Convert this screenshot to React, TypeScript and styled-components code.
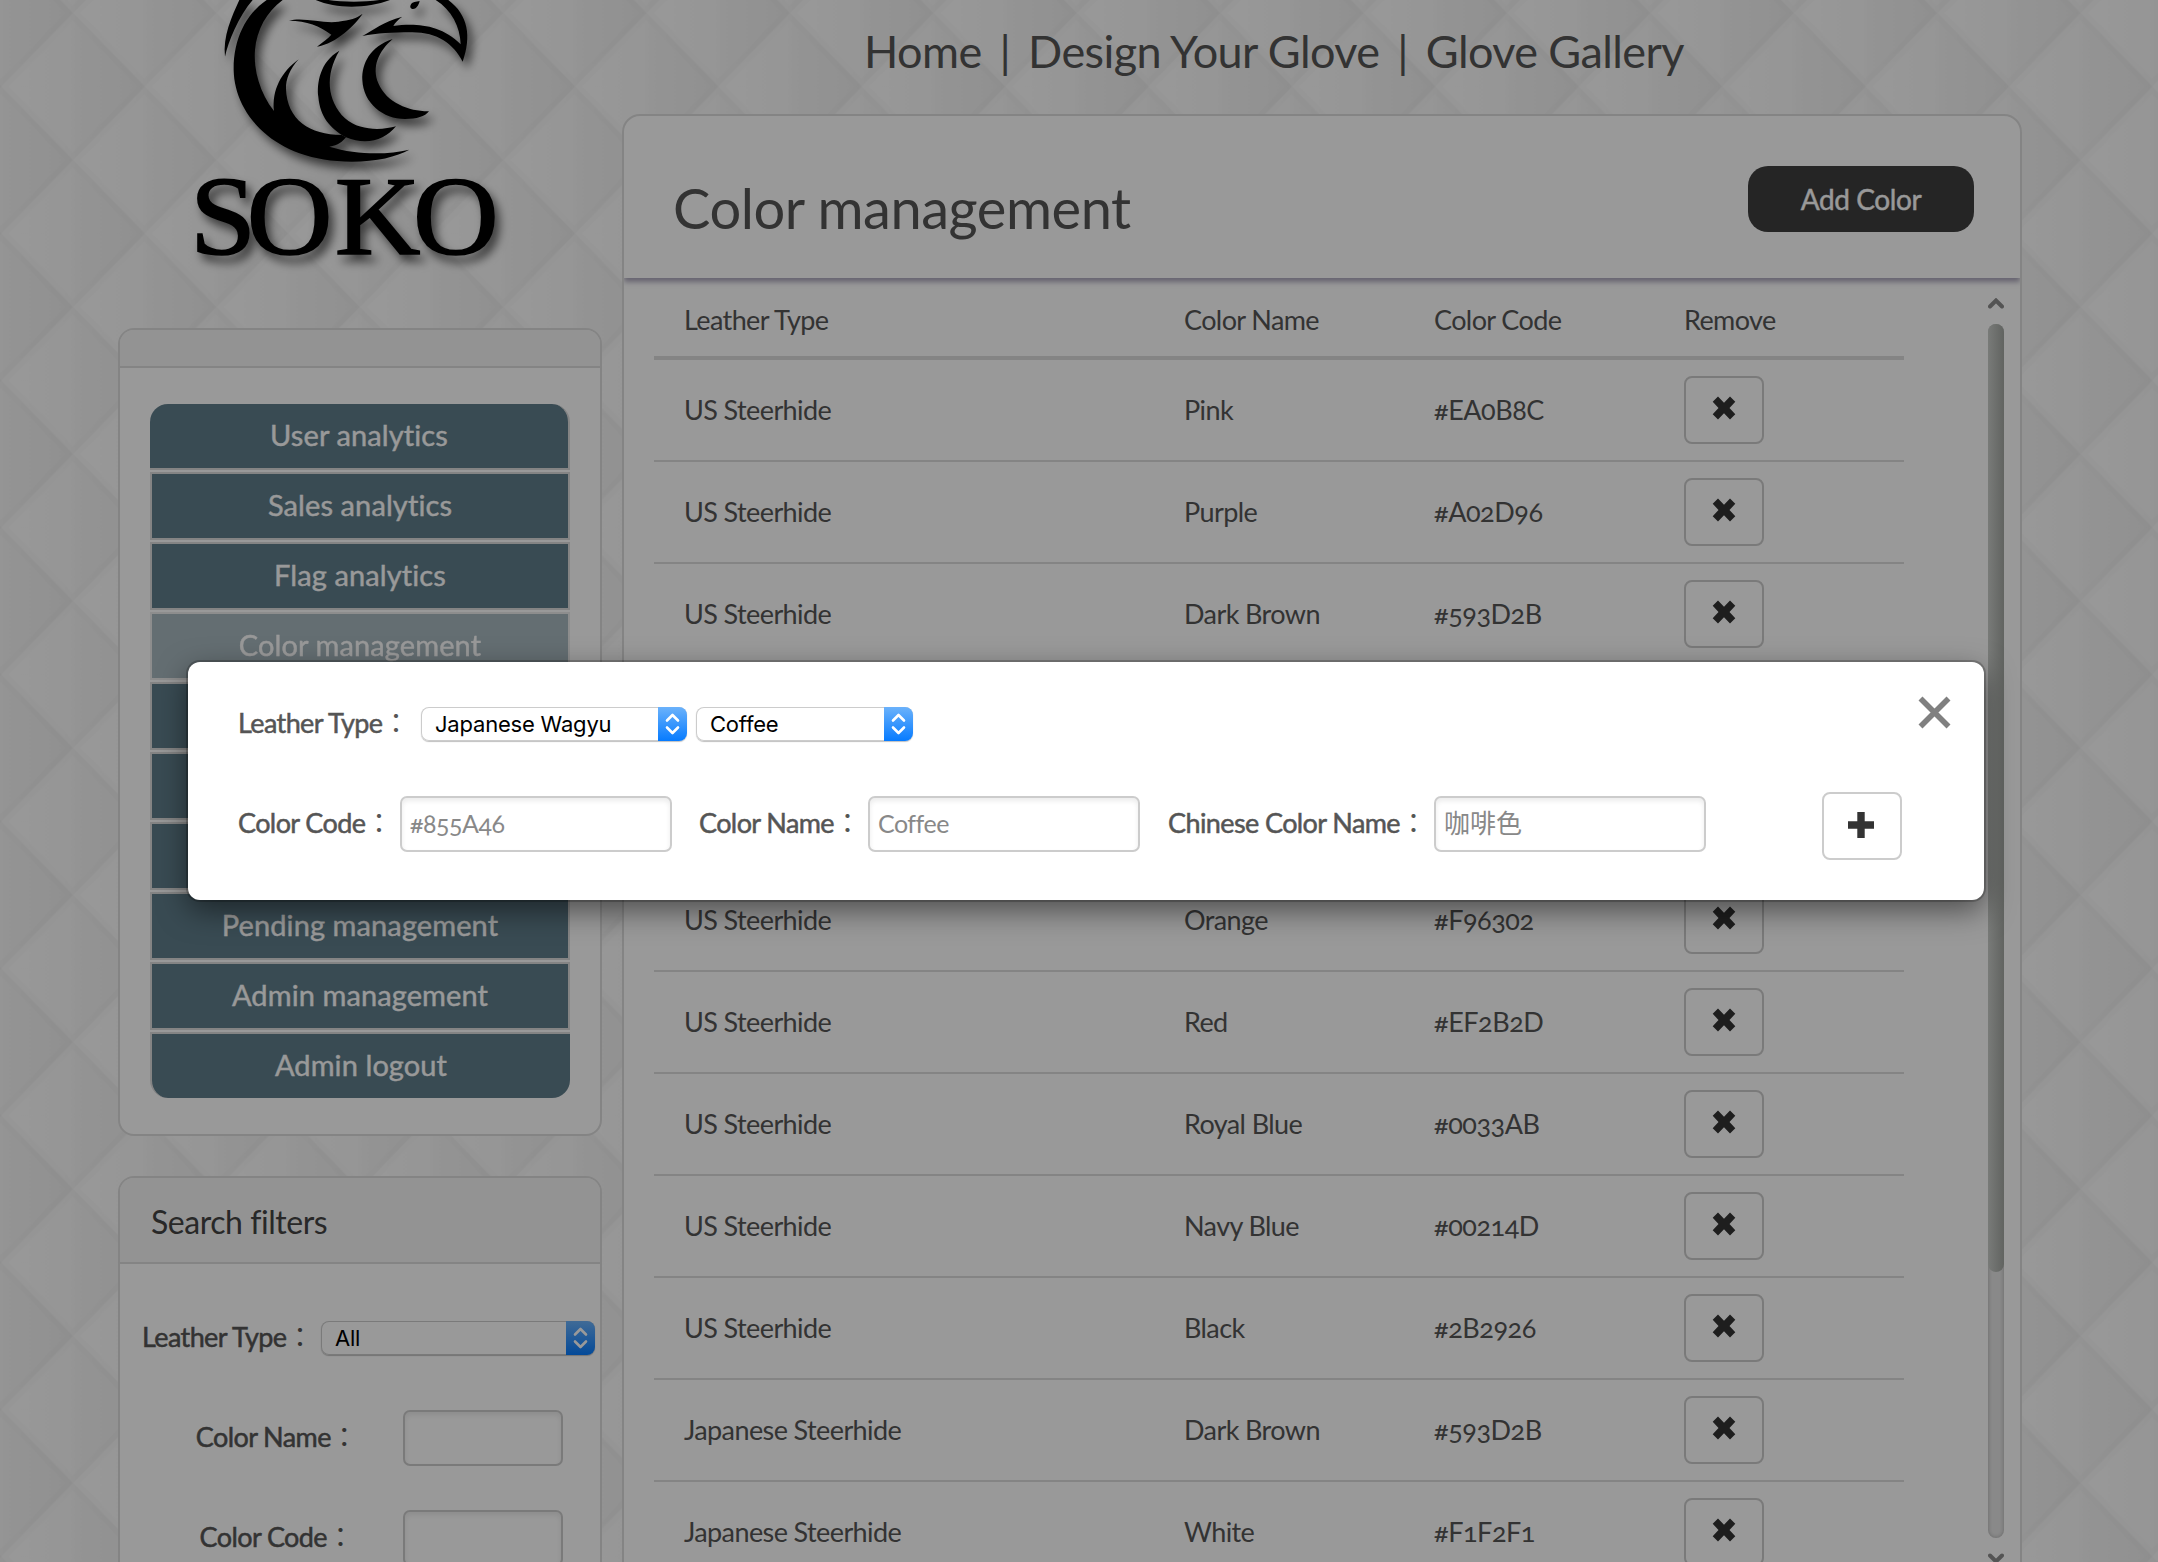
import React from "react";
import styled, { createGlobalStyle, css } from "styled-components";

const GlobalStyle = createGlobalStyle`
  * { box-sizing: border-box; }
  html, body { margin: 0; padding: 0; }
  body {
    width: 2158px;
    height: 1562px;
    overflow: hidden;
    background: #f9f9f9;
    color: #555;
    font-family: Lato, "Noto Sans CJK TC", sans-serif;
    font-size: 27px;
    font-variant-numeric: oldstyle-nums;
    font-variant-ligatures: none;
  }
`;

const Viewport = styled.div`
  position: relative;
  width: 2158px;
  height: 1562px;
  overflow: hidden;
`;

const Backdrop = styled.svg`
  position: absolute;
  inset: 0;
`;

const Page = styled.div`
  position: relative;
  display: flex;
  gap: 20px;
  height: 100%;
  padding: 0 136px 0 118px;
`;

const Sidebar = styled.aside`
  width: 484px;
  flex: none;
`;

const LogoBox = styled.div`
  height: 328px;
  padding-left: 52px;
  svg {
    display: block;
    overflow: visible;
    filter: drop-shadow(5px 7px 5px rgba(0, 0, 0, 0.6));
  }
`;

const Panel = styled.section`
  background: #fff;
  border: 2px solid #ddd;
  border-radius: 16px;
  overflow: hidden;
`;

const SidePanel = styled(Panel)<{ $height: number }>`
  height: ${(p) => p.$height}px;
  margin-bottom: 40px;
`;

const SideHeading = styled.div<{ $height: number }>`
  height: ${(p) => p.$height}px;
  padding-left: 31px;
  background: #f5f5f5;
  border-bottom: 2px solid #ddd;
  color: #444;
  font-size: 32px;
  line-height: 88px;
  letter-spacing: -0.45px;
`;

const Menu = styled.nav`
  display: flex;
  flex-direction: column;
  gap: 2px;
  width: 420px;
  margin: 36px 0 0 30px;
`;

const MenuItem = styled.a<{ $active?: boolean }>`
  height: 68px;
  border: 2px solid #ddd;
  background: #607d8b;
  color: #fff;
  font-size: 29px;
  line-height: 61px;
  letter-spacing: 0.1px;
  text-align: center;
  -webkit-text-stroke: 0.4px currentColor;
  ${(p) => p.$active && css`opacity: 0.55;`}
  &:first-child {
    height: 66px;
    border-top: 0;
    border-left: 0;
    border-radius: 18px 18px 0 0;
  }
  &:last-child {
    height: 66px;
    border-right: 0;
    border-bottom: 0;
    border-radius: 0 0 18px 18px;
  }
`;

const Filters = styled.div`
  display: flex;
  flex-direction: column;
  padding-top: 57px;
`;

const FilterSelectRow = styled.div`
  display: flex;
  align-items: center;
  height: 34px;
  margin-bottom: 55px;
  padding-left: 22px;
`;

const FilterRow = styled.div`
  display: flex;
  align-items: center;
  height: 56px;
  margin-bottom: 44px;
  padding-left: 30px;
`;

const Label = styled.label<{ $width: number; $center?: boolean }>`
  flex: none;
  width: ${(p) => p.$width}px;
  padding-bottom: 2px;
  line-height: 34px;
  letter-spacing: -0.6px;
  white-space: nowrap;
  text-align: ${(p) => (p.$center ? "center" : "left")};
  -webkit-text-stroke: 0.5px currentColor;
`;

const Colon = styled.span`
  -webkit-text-stroke: 0;
`;

const Field = styled.input<{ $width: number; $chinese?: boolean }>`
  flex: none;
  width: ${(p) => p.$width}px;
  height: 56px;
  padding: 0 8px 3px;
  border: 2px solid #ccc;
  border-radius: 7px;
  background: #fff;
  box-shadow: inset 0 3px 5px rgba(0, 0, 0, 0.08);
  font: inherit;
  font-size: ${(p) => (p.$chinese ? 26 : 25)}px;
  font-variant-numeric: oldstyle-nums;
  font-variant-ligatures: none;
  letter-spacing: ${(p) => (p.$chinese ? 0 : -0.5)}px;
  &::placeholder { color: #888; opacity: 1; }
`;

const SelectBox = styled.div<{ $width: number; $stepper: number; $inset: number }>`
  display: flex;
  flex: none;
  align-items: stretch;
  width: ${(p) => p.$width}px;
  height: 34px;
  border-radius: 8px;
  background: #fff;
  box-shadow: inset 0 0 0 1px #ccc, 0 1px 1px rgba(0, 0, 0, 0.25);
  color: #000;
  font: 22px/35px Inter, sans-serif;
  letter-spacing: -0.2px;
  overflow: hidden;
  > span { flex: 1; padding-left: ${(p) => p.$inset}px; }
  > svg {
    width: ${(p) => p.$stepper}px;
    height: 34px;
    background: linear-gradient(#6bb2fb, #067bff);
  }
`;

const Main = styled.main`
  width: 1400px;
  flex: none;
`;

const TopNav = styled.nav`
  display: flex;
  align-items: flex-start;
  height: 114px;
  padding-left: 242px;
  color: #555;
  font-size: 45px;
  line-height: 103px;
  letter-spacing: -0.6px;
  white-space: pre;
`;

const Divider = styled.span`
  margin: 0 7px;
`;

const MainPanel = styled(Panel)`
  height: 1500px;
  border-radius: 18px;
`;

const MainHeader = styled.header`
  position: relative;
  display: flex;
  justify-content: space-between;
  align-items: flex-start;
  height: 162px;
  padding: 50px 46px 0 49px;
  box-shadow: 0 4px 5px rgba(90, 80, 120, 0.5);
`;

const Title = styled.h1`
  margin: 0;
  font-size: 56px;
  font-weight: 400;
  line-height: 84px;
  letter-spacing: -0.45px;
`;

const AddButton = styled.button`
  width: 226px;
  height: 66px;
  padding: 0;
  border: 0;
  border-radius: 20px;
  background: #3f3f3f;
  color: #fff;
  font: inherit;
  font-size: 28px;
  letter-spacing: -0.4px;
  -webkit-text-stroke: 0.4px currentColor;
`;

const TableArea = styled.div`
  display: flex;
  justify-content: space-between;
  padding: 0 16px 0 30px;
`;

const Table = styled.div`
  width: 1250px;
`;

const Row = styled.div`
  display: grid;
  grid-template-columns: 500px 250px 250px 250px;
  height: 102px;
  padding: 16px 0 0 30px;
  border-bottom: 2px solid #ddd;
  line-height: 68px;
  letter-spacing: -0.6px;
`;

const HeadRow = styled(Row)`
  height: 82px;
  padding-top: 8px;
  border-bottom-width: 4px;
`;

const Code = styled.span`
  letter-spacing: -0.45px;
`;

const IconButton = styled.button`
  display: flex;
  align-items: center;
  justify-content: center;
  width: 80px;
  height: 68px;
  padding: 0 2px 2px 0;
  border: 2px solid #ccc;
  border-radius: 8px;
  background: #fff;
`;

const RemoveButton = styled(IconButton)`
  padding: 0 0 4px;
`;

const Scrollbar = styled.div`
  display: flex;
  flex-direction: column;
  align-items: center;
  width: 16px;
  padding-top: 20px;
`;

const Track = styled.div`
  width: 16px;
  height: 1214px;
  margin: 15px 0;
  border-radius: 8px;
  background: #e5e5e5;
  box-shadow: inset 0 0 4px rgba(0, 0, 0, 0.25);
`;

const Thumb = styled.div`
  height: 948px;
  border-radius: 8px;
  background: linear-gradient(90deg, #c9cdc9, #a2a6a1);
`;

const Overlay = styled.div`
  position: absolute;
  inset: 0;
  display: flex;
  align-items: flex-start;
  padding: 662px 0 0 188px;
  background: rgba(0, 0, 0, 0.4);
`;

const Dialog = styled.div`
  display: flex;
  flex-direction: column;
  width: 1796px;
  height: 238px;
  padding: 34px 33px 40px 50px;
  border-radius: 12px;
  background: #fff;
  box-shadow: 0 0 0 2px rgba(0, 0, 0, 0.2), 0 10px 30px rgba(0, 0, 0, 0.5);
`;

const DialogTop = styled.div`
  display: flex;
  height: 96px;
`;

const DialogSelects = styled.div`
  display: flex;
  align-items: center;
  height: 34px;
  margin-top: 11px;
  gap: 9px;
`;

const CloseButton = styled.button`
  width: 33px;
  height: 33px;
  margin-left: auto;
  padding: 0;
  border: 0;
  background: none;
  svg { display: block; }
`;

const DialogFields = styled.div`
  display: flex;
  align-items: center;
  height: 68px;
`;

const FieldGroup = styled.div<{ $gap: number }>`
  display: flex;
  align-items: center;
  height: 60px;
  margin-right: ${(p) => p.$gap}px;
  margin-bottom: 4px;
`;

const SokoWord = styled.text`
  font-family: "Liberation Serif", serif;
  font-size: 339px;
  stroke: #000;
  stroke-width: 5px;
`;

function QuiltedBackdrop() {
  return (
    <Backdrop width="2158" height="1562">
      <defs>
        <linearGradient id="quilt">
          <stop offset="0" stopColor="#fefefe" />
          <stop offset="0.48" stopColor="#fafafa" />
          <stop offset="0.52" stopColor="#f7f7f7" />
          <stop offset="1" stopColor="#f0f0f0" />
        </linearGradient>
        <pattern id="diamonds" width="143.4" height="147" patternUnits="userSpaceOnUse" patternTransform="translate(73 -60.5)">
          <rect width="143.4" height="147" fill="#f5f5f5" />
          {[[71.7, 73.5], [0, 0], [143.4, 0], [0, 147], [143.4, 147]].map(([x, y], i) => (
            <polygon
              key={i}
              points={`${x - 71.7},${y} ${x},${y - 73.5} ${x + 71.7},${y} ${x},${y + 73.5}`}
              fill="url(#quilt)"
            />
          ))}
          <path d="M0 73.5 L71.7 147 L143.4 73.5 M0 73.5 L71.7 0 L143.4 73.5" fill="none" stroke="#000" strokeOpacity="0.01" strokeWidth="10" />
        </pattern>
      </defs>
      <rect width="2158" height="1562" fill="url(#diamonds)" />
    </Backdrop>
  );
}

function Logo() {
  return (
    <svg width="360" height="290" viewBox="0 0 1080 870">
      <path d="M208 0C185 50 158 110 165 170C175 125 205 50 248 0Z" />
      <path d="M290 0C225 45 190 120 191 210C193 340 310 485 545 485C620 485 680 470 718 449C650 465 560 465 478 440C505 436 518 425 528 412L515 405C420 405 350 360 348 265C347 240 360 205 386 178C335 215 305 270 312 333C270 280 250 210 255 150C260 90 290 35 338 0Z" />
      <path d="M508 152C450 185 440 250 445 290C450 350 480 385 528 412C590 437 645 420 678 379C640 390 570 395 525 355C470 300 465 225 508 152Z" />
      <path d="M668 117C600 140 575 190 577 240C580 310 640 357 705 357C740 357 765 350 777 334C720 335 650 310 625 250C605 200 625 155 668 117Z" />
      <path d="M437 0C500 27 590 26 660 0L628 0C580 7 515 6 475 0Z" />
      <path d="M357 62C400 50 460 72 505 65C540 60 560 55 578 41C555 75 500 130 441 140C460 125 475 115 484 104C450 78 410 62 357 62Z" />
      <path d="M722 15C725 5 740 5 749 3C745 20 735 30 725 26C720 24 720 18 722 15Z" />
      <path d="M797 0C845 30 870 80 872 133C810 70 730 70 670 78C675 68 685 58 697 50C640 65 610 90 577 108C620 100 670 97 720 97C800 95 850 130 878 185C905 110 895 45 835 0Z" />
      <SokoWord transform="scale(1.05 1)" x="57 219 471 694" y="762">SOKO</SokoWord>
    </svg>
  );
}

function RemoveIcon() {
  return (
    <svg width="24" height="24" viewBox="0 0 24 24">
      <path d="M6 .5 12 6.8 18 .5 23.3 5.8 17.5 12 23.3 18.2 18 23.5 12 17.2 6 23.5.7 18.2 6.5 12 .7 5.8Z" fill="#333" />
    </svg>
  );
}

function FieldLabel(props: { text: string; width: number; center?: boolean }) {
  return (
    <Label $width={props.width} $center={props.center}>
      {props.text}<Colon>：</Colon>
    </Label>
  );
}

function Select(props: { value: string; width: number; stepper: number; inset?: number }) {
  return (
    <SelectBox $width={props.width} $stepper={props.stepper} $inset={props.inset ?? 14}>
      <span>{props.value}</span>
      <svg viewBox="0 0 29 34" fill="none" stroke="#fff" strokeWidth="2.6" strokeLinecap="round" strokeLinejoin="round">
        <path d="M9 13.5 14.5 8 20 13.5M9 20.5 14.5 26 20 20.5" />
      </svg>
    </SelectBox>
  );
}

const Chevron = ({ down }: { down?: boolean }) => (
  <svg width="16" height="11" viewBox="0 0 16 11" fill="none" stroke="#8c8c8c" strokeWidth="4" strokeLinecap="round">
    <path d={down ? "M2 2.5 8 8.5 14 2.5" : "M2 8.5 8 2.5 14 8.5"} />
  </svg>
);

const menuItems = [
  "User analytics", "Sales analytics", "Flag analytics", "Color management",
  "", "", "", "Pending management", "Admin management", "Admin logout",
];

const colors = [
  ["US Steerhide", "Pink", "#EA0B8C"],
  ["US Steerhide", "Purple", "#A02D96"],
  ["US Steerhide", "Dark Brown", "#593D2B"],
  ["", "", ""],
  ["", "", ""],
  ["US Steerhide", "Orange", "#F96302"],
  ["US Steerhide", "Red", "#EF2B2D"],
  ["US Steerhide", "Royal Blue", "#0033AB"],
  ["US Steerhide", "Navy Blue", "#00214D"],
  ["US Steerhide", "Black", "#2B2926"],
  ["Japanese Steerhide", "Dark Brown", "#593D2B"],
  ["Japanese Steerhide", "White", "#F1F2F1"],
];

export default function App() {
  return (
    <Viewport>
      <GlobalStyle />
      <QuiltedBackdrop />
      <Page>
        <Sidebar>
          <LogoBox><Logo /></LogoBox>
          <SidePanel $height={808}>
            <SideHeading $height={38} />
            <Menu>
              {menuItems.map((item, i) => (
                <MenuItem key={i} $active={i === 3}>{item}</MenuItem>
              ))}
            </Menu>
          </SidePanel>
          <SidePanel $height={500}>
            <SideHeading $height={86}>Search filters</SideHeading>
            <Filters>
              <FilterSelectRow>
                <FieldLabel width={179} text="Leather Type" />
                <Select value="All" width={274} stepper={29} />
              </FilterSelectRow>
              <FilterRow>
                <FieldLabel width={253} center text="Color Name" />
                <Field $width={160} />
              </FilterRow>
              <FilterRow>
                <FieldLabel width={253} center text="Color Code" />
                <Field $width={160} />
              </FilterRow>
            </Filters>
          </SidePanel>
        </Sidebar>
        <Main>
          <TopNav>
            <a>Home</a><Divider> | </Divider><a>Design Your Glove</a><Divider> | </Divider><a>Glove Gallery</a>
          </TopNav>
          <MainPanel>
            <MainHeader>
              <Title>Color management</Title>
              <AddButton>Add Color</AddButton>
            </MainHeader>
            <TableArea>
              <Table>
                <HeadRow>
                  <span>Leather Type</span>
                  <span>Color Name</span>
                  <span>Color Code</span>
                  <span>Remove</span>
                </HeadRow>
                {colors.map(([leather, name, code], i) => (
                  <Row key={i}>
                    <span>{leather}</span>
                    <span>{name}</span>
                    <Code>{code}</Code>
                    <RemoveButton><RemoveIcon /></RemoveButton>
                  </Row>
                ))}
              </Table>
              <Scrollbar>
                <Chevron />
                <Track><Thumb /></Track>
                <Chevron down />
              </Scrollbar>
            </TableArea>
          </MainPanel>
        </Main>
      </Page>
      <Overlay>
        <Dialog>
          <DialogTop>
            <DialogSelects>
              <FieldLabel width={174} text="Leather Type" />
              <Select value="Japanese Wagyu" width={266} stepper={29} />
              <Select value="Coffee" width={217} stepper={29} />
            </DialogSelects>
            <CloseButton>
              <svg width="33" height="33" viewBox="0 0 33 33">
                <path d="M2.5 2.5 30.5 30.5M30.5 2.5 2.5 30.5" stroke="#808080" strokeWidth="5.6" />
              </svg>
            </CloseButton>
          </DialogTop>
          <DialogFields>
            <FieldGroup $gap={27}>
              <FieldLabel width={162} text="Color Code" />
              <Field $width={272} placeholder="#855A46" />
            </FieldGroup>
            <FieldGroup $gap={28}>
              <FieldLabel width={169} text="Color Name" />
              <Field $width={272} placeholder="Coffee" />
            </FieldGroup>
            <FieldGroup $gap={116}>
              <FieldLabel width={266} text="Chinese Color Name" />
              <Field $width={272} $chinese placeholder="咖啡色" />
            </FieldGroup>
            <IconButton>
              <svg width="26" height="26" viewBox="0 0 26 26">
                <path d="M13 0V26M0 13H26" stroke="#333" strokeWidth="7.4" />
              </svg>
            </IconButton>
          </DialogFields>
        </Dialog>
      </Overlay>
    </Viewport>
  );
}
